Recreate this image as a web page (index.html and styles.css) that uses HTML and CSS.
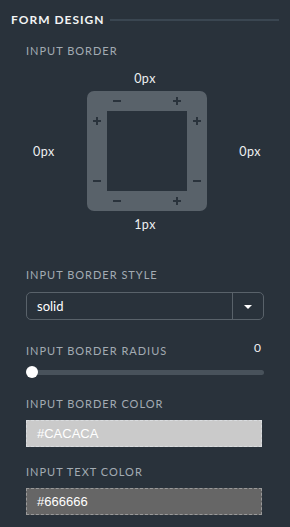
FILE: index.html
```html
<!DOCTYPE html>
<html lang="en">
<head>
    <meta charset="UTF-8">
    <meta name="viewport" content="width=device-width, initial-scale=1.0">
    <title>Form Design</title>
    <link rel="stylesheet" href="styles.css">
</head>
<body>

    <!-- Section title -->
    <div class="section-title">
        <h2>FORM DESIGN</h2>
        <span class="title-line"></span>
    </div>

    <div class="panel">
        <!-- Border widths -->
        <div class="field-label">INPUT BORDER</div>
        <div class="border-editor">
            <div class="px-value top">0px</div>
            <div class="border-row">
                <div class="px-value side left">0px</div>
                <div class="border-box">
                    <span class="ctl minus t1"></span>
                    <span class="ctl plus t2"></span>
                    <span class="ctl plus l1"></span>
                    <span class="ctl minus l2"></span>
                    <span class="ctl plus r1"></span>
                    <span class="ctl minus r2"></span>
                    <span class="ctl minus b1"></span>
                    <span class="ctl plus b2"></span>
                    <div class="border-inner"></div>
                </div>
                <div class="px-value side right">0px</div>
            </div>
            <div class="px-value bottom">1px</div>
        </div>

        <!-- Border style -->
        <div class="field-label style-label">INPUT BORDER STYLE</div>
        <div class="select">
            <span class="select-value">solid</span>
            <span class="select-arrow"><span class="caret"></span></span>
        </div>

        <!-- Border radius -->
        <div class="label-row">
            <div class="field-label">INPUT BORDER RADIUS</div>
            <div class="range-value">0</div>
        </div>
        <div class="slider">
            <div class="slider-track"></div>
            <div class="slider-thumb"></div>
        </div>

        <!-- Colors -->
        <div class="field-label color-label">INPUT BORDER COLOR</div>
        <div class="color-input light">#CACACA</div>

        <div class="field-label color-label second">INPUT TEXT COLOR</div>
        <div class="color-input dark">#666666</div>
    </div>

</body>
</html>
```

FILE: styles.css
```css
body {
    margin: 0;
    font-family: 'Lato', 'Noto Sans', sans-serif;
    background-color: #29323b;
    color: #ffffff;
    width: 290px;
    height: 527px;
    overflow: hidden;
}

/* Section title */
.section-title {
    display: flex;
    align-items: center;
    padding: 12px 11px 0 11px;
}

.section-title h2 {
    margin: 0;
    font-size: 12px;
    line-height: 16px;
    font-weight: 700;
    letter-spacing: 1px;
    color: #f2f4f5;
}

.title-line {
    flex: 1;
    height: 2px;
    margin-left: 5px;
    background: #3a4651;
}

.panel {
    padding: 0 26px;
}

.field-label {
    font-size: 11px;
    line-height: 14px;
    letter-spacing: 1px;
    color: #a3abb3;
    margin-top: 16px;
}

/* Border editor */
.border-editor {
    margin-top: 13px;
}

.px-value {
    font-size: 12.5px;
    line-height: 16px;
    color: #eef0f1;
    letter-spacing: 0.5px;
    text-align: center;
}

.px-value.bottom {
    margin-top: 6px;
}

.border-row {
    display: flex;
    align-items: center;
    margin-top: 4px;
}

.px-value.side {
    flex: 1 1 0;
    box-sizing: border-box;
    padding-top: 2px;
}

.px-value.left {
    text-align: left;
    padding-left: 7px;
}

.px-value.right {
    text-align: right;
    padding-right: 3px;
}

.border-box {
    position: relative;
    width: 120px;
    height: 120px;
    box-sizing: border-box;
    padding: 20px;
    background: #59626a;
    border-radius: 7px;
}

.border-inner {
    width: 80px;
    height: 80px;
    background: #29323b;
}

.ctl {
    position: absolute;
    width: 8px;
    height: 8px;
}

.ctl::before,
.ctl::after {
    content: '';
    position: absolute;
    background: #2a333c;
}

.ctl::before {
    left: 0;
    top: 3px;
    width: 8px;
    height: 2px;
}

.plus::after {
    left: 3px;
    top: 0;
    width: 2px;
    height: 8px;
}

.t1 { left: 26px; top: 6px; }
.t2 { left: 86px; top: 6px; }
.l1 { left: 6px; top: 26px; }
.l2 { left: 6px; top: 86px; }
.r1 { left: 106px; top: 26px; }
.r2 { left: 106px; top: 86px; }
.b1 { left: 26px; top: 106px; }
.b2 { left: 86px; top: 106px; }

/* Select */
.style-label {
    margin-top: 35px;
}

.select {
    display: flex;
    height: 28px;
    margin-top: 10px;
    border: 1px solid #59626a;
    border-radius: 5px;
    box-sizing: border-box;
}

.select-value {
    flex: 1;
    padding-left: 10px;
    font-size: 13px;
    line-height: 26px;
    color: #ffffff;
}

.select-arrow {
    width: 30px;
    border-left: 1px solid #59626a;
    display: flex;
    align-items: center;
    justify-content: center;
}

.caret {
    width: 0;
    height: 0;
    border-left: 4px solid transparent;
    border-right: 4px solid transparent;
    border-top: 4px solid #ffffff;
    margin-top: 2px;
}

/* Slider */
.label-row {
    display: flex;
    justify-content: space-between;
    align-items: flex-end;
    margin-top: 21px;
}

.label-row .field-label {
    margin-top: 0;
}

.range-value {
    font-size: 12px;
    line-height: 14px;
    color: #eef0f1;
    padding-right: 3px;
    margin-bottom: 3px;
}

.slider {
    position: relative;
    height: 12px;
    margin-top: 8px;
    display: flex;
    align-items: center;
}

.slider-track {
    flex: 1;
    height: 5px;
    margin-left: 4px;
    border-radius: 3px;
    background: #48525b;
}

.slider-thumb {
    position: absolute;
    left: 0;
    top: 0;
    width: 12px;
    height: 12px;
    border-radius: 50%;
    background: #ffffff;
}

/* Colour inputs */
.color-label {
    margin-top: 19px;
}

.color-label.second {
    margin-top: 18px;
}

.color-input {
    width: 236px;
    height: 27px;
    box-sizing: border-box;
    margin-top: 9px;
    padding-left: 10px;
    border: 1px dashed #d9dcdf;
    font-family: 'Liberation Sans', Arial, sans-serif;
    font-size: 13px;
    line-height: 25px;
    color: #ffffff;
}

.color-input.light {
    background: #cacaca;
}

.color-input.dark {
    background: #666666;
    border-color: #9a9a9a;
}
```
